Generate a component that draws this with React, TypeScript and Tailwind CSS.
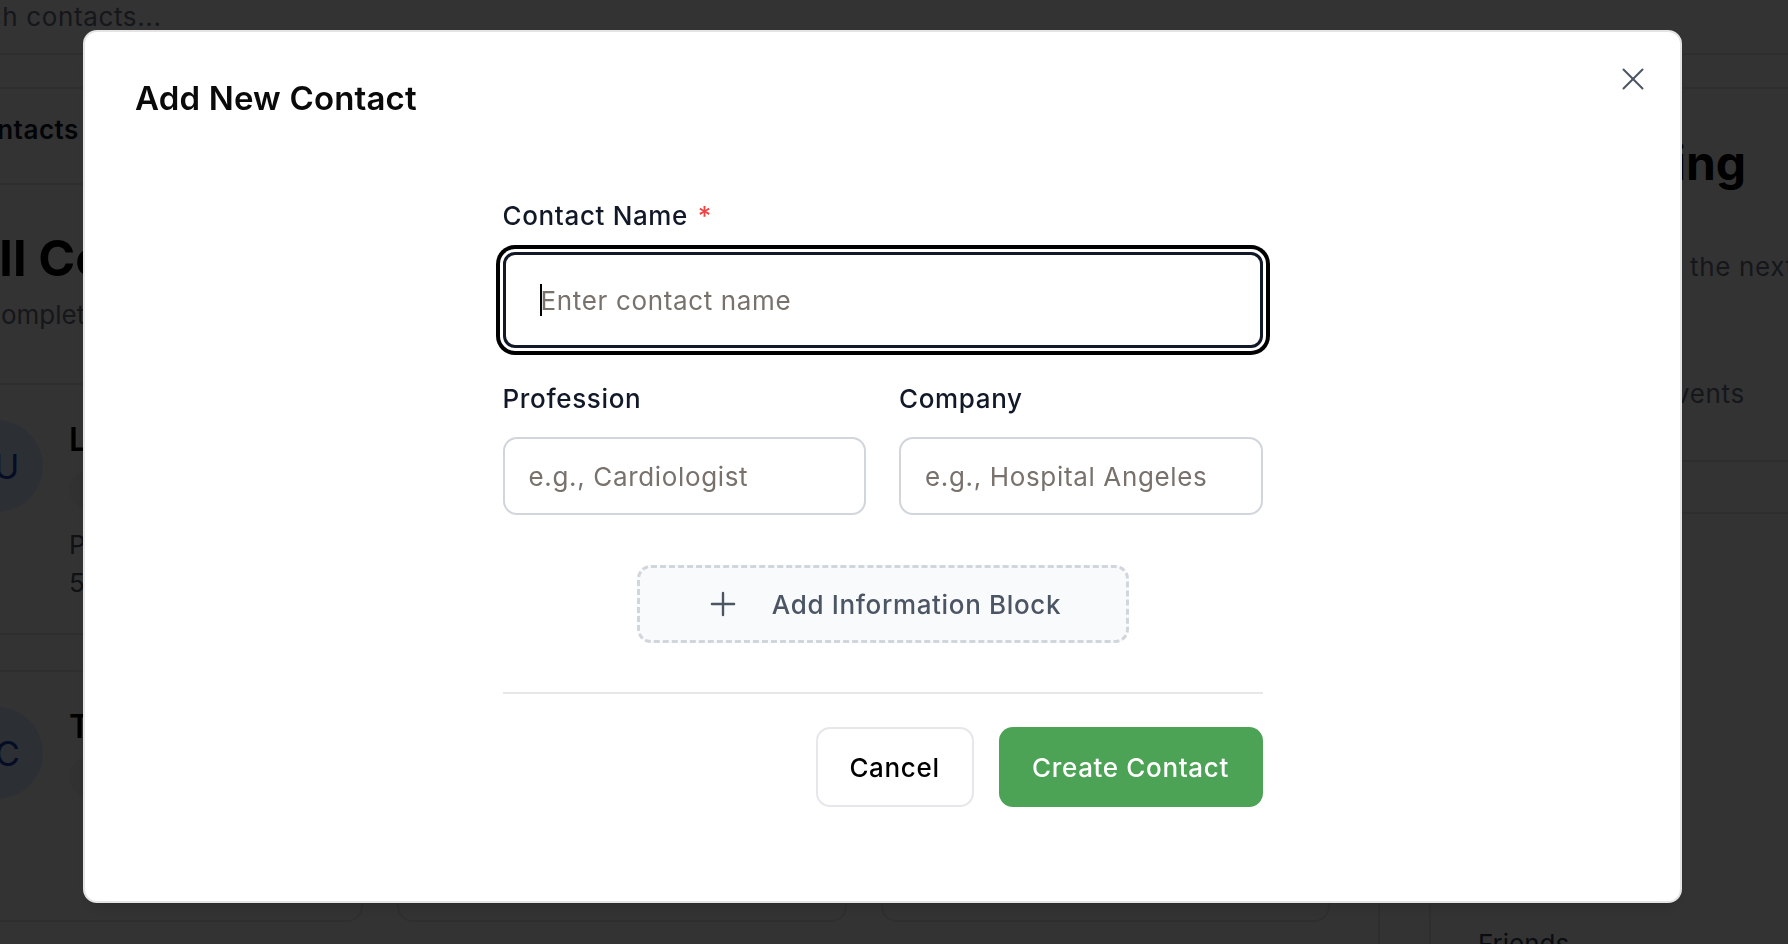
import { X, Plus } from "lucide-react";

function BackgroundPage() {
    const cards = [
        { initials: "LU", name: "Laura Uribe", tag: "Doctor", line1: "Pediatra · Hospital ABC", line2: "55 1234 5678" },
        { initials: "MR", name: "María Ruiz", tag: "Work", line1: "Abogada · Ruiz & Co", line2: "55 2222 3333" },
        { initials: "JP", name: "Jorge Pérez", tag: "Family", line1: "Ingeniero", line2: "55 4444 5555" },
        { initials: "TC", name: "Tomás Castillo", tag: "Friends", line1: "", line2: "" },
        { initials: "AS", name: "Ana Soto", tag: "Work", line1: "", line2: "" },
        { initials: "DG", name: "Diego Gómez", tag: "Friends", line1: "", line2: "" },
    ];

    return (
        <div className="h-[944px] w-full overflow-hidden bg-white font-['Inter',sans-serif] text-gray-900">
            <div className="h-[55px] border-b-2 border-gray-200 pt-[2px]">
                <span className="block -ml-[72px] whitespace-nowrap text-[26px] leading-[30px] tracking-[0.025em] text-gray-500">Search contacts...</span>
            </div>
            <div className="h-[34px] border-b-2 border-gray-200" />
            <div className="flex">
                <main className="-ml-[120px] w-[1500px] shrink-0 border-r-2 border-gray-200">
                    <div className="flex h-[96px] items-center border-b-2 border-gray-200 pb-[14px] pl-[40px]">
                        <span className="whitespace-nowrap text-[26px] font-semibold tracking-[0.02em] text-gray-900">All Contacts</span>
                    </div>
                    <h1 className="ml-[82px] mt-[45px] whitespace-nowrap text-[50px] font-bold leading-[56px] text-black">All Contacts</h1>
                    <p className="ml-[102px] mt-[13px] whitespace-nowrap text-[26px] leading-[32px] text-gray-500">Complete list of your professional contacts</p>
                    <div className="ml-[34px] mt-[52px] grid w-[1416px] grid-cols-3 gap-x-[34px] gap-y-[35px]">
                        {cards.map((c, i) => (
                            <div key={i} className="flex h-[252px] gap-[26px] rounded-[16px] border-2 border-gray-200 px-[35px] pt-[35px]">
                                <div className="flex h-[92px] w-[92px] shrink-0 items-center justify-center rounded-full bg-blue-100 text-[34px] text-blue-800">
                                    {c.initials}
                                </div>
                                <div className="flex flex-col">
                                    <span className="whitespace-nowrap text-[32px] font-semibold leading-[40px] text-black">{c.name}</span>
                                    <span className="mt-[10px] w-fit rounded-full bg-gray-100 px-[16px] text-[20px] leading-[40px] text-gray-600">{c.tag}</span>
                                    {c.line1 && (
                                        <span className="mt-[17px] whitespace-nowrap text-[26px] leading-[36px] text-gray-600">{c.line1}</span>
                                    )}
                                    {c.line2 && (
                                        <span className="mt-[2px] whitespace-nowrap text-[26px] leading-[36px] text-gray-600">{c.line2}</span>
                                    )}
                                </div>
                            </div>
                        ))}
                    </div>
                </main>
                <aside className="flex-1 pl-[49px]">
                    <div className="h-[900px] border-l-2 border-gray-200">
                        <div className="border-b-2 border-gray-200 pb-[50px] pl-[75px]">
                            <h2 className="mt-[46px] whitespace-nowrap text-[48px] font-bold leading-[56px] text-black">Upcoming</h2>
                            <p className="ml-[59px] mt-[60px] whitespace-nowrap text-[26px] leading-[32px] tracking-[0.025em] text-gray-500">Events in the next 7 days</p>
                            <p className="-ml-[26px] mt-[95px] whitespace-nowrap text-[26px] leading-[32px] tracking-[0.025em] text-gray-500">No upcoming events</p>
                        </div>
                        <div className="mt-[50px] border-t-2 border-gray-200" />
                        <p className="mt-[412px] pl-[47px] text-[26px] leading-[36px] text-gray-700">Friends</p>
                    </div>
                </aside>
            </div>
        </div>
    );
}

function Field({ label, placeholder }: { label: string; placeholder: string }) {
    return (
        <div className="flex flex-col">
            <label className="text-[26px] font-medium leading-[32px] tracking-[0.025em] text-[#111827]">{label}</label>
            <input
                type="text"
                placeholder={placeholder}
                className="mt-[22px] h-[78px] w-full rounded-[14px] border-2 border-gray-300 bg-white pl-[24px] text-[26px] tracking-[0.025em] text-gray-900 outline-none placeholder:text-[#78716c]"
            />
        </div>
    );
}

export default function App() {
    return (
        <div className="relative h-[944px] w-full overflow-hidden">
            <BackgroundPage />

            <div className="fixed inset-0 bg-black/80 pl-[83px] pt-[30px] font-['Inter',sans-serif]">
                <div className="relative h-[873px] w-[1599px] rounded-[14px] border-2 border-[#e4e4e4] bg-white px-[50px] pt-[46px] shadow-lg">
                    <button className="absolute right-[28px] top-[28px] text-[#4b5563]">
                        <X size={38} strokeWidth={1.25} />
                    </button>

                    <h2 className="text-[33px] font-semibold leading-[40px] tracking-[0.005em] text-[#0a0a0a]">Add New Contact</h2>

                    <form className="mx-auto mt-[82px] w-[760px]" onSubmit={(e) => e.preventDefault()}>
                        <div className="flex flex-col">
                            <label className="text-[26px] font-medium leading-[32px] tracking-[0.025em] text-[#111827]">
                                Contact Name <span className="ml-[2px] text-[#ef4444]">*</span>
                            </label>
                            <div className="relative mt-[20px]">
                                <input
                                    type="text"
                                    placeholder="Enter contact name"
                                    className="h-[96px] w-full rounded-[12px] border-[3px] border-[#111827] bg-white pl-[35px] text-[26px] tracking-[0.025em] text-gray-900 outline-none ring-4 ring-black ring-offset-3 ring-offset-white placeholder:text-[#78716c]"
                                />
                                <span className="absolute left-[37px] top-[32px] h-[32px] w-[2px] bg-black" />
                            </div>
                        </div>

                        <div className="mt-[35px] grid grid-cols-2 gap-[33px]">
                            <Field label="Profession" placeholder="e.g., Cardiologist" />
                            <Field label="Company" placeholder="e.g., Hospital Angeles" />
                        </div>

                        <button
                            type="button"
                            className="mx-auto mt-[50px] flex h-[78px] w-[492px] items-center justify-center gap-[30px] rounded-[14px] border-[3px] border-dashed border-gray-300 bg-gray-50 text-[26px] font-medium tracking-[0.025em] text-[#4b5563]"
                        >
                            <Plus size={38} strokeWidth={1.5} />
                            <span>Add Information Block</span>
                        </button>

                        <div className="mt-[49px] h-[2px] w-full bg-gray-200" />

                        <div className="mt-[33px] flex justify-end gap-[25px]">
                            <button
                                type="button"
                                className="h-[80px] w-[158px] rounded-[14px] border-2 border-gray-200 bg-white text-[26px] font-medium tracking-[0.025em] text-black"
                            >
                                Cancel
                            </button>
                            <button
                                type="submit"
                                className="h-[80px] w-[264px] rounded-[14px] bg-[#4ca355] text-[26px] font-medium tracking-[0.025em] text-white"
                            >
                                Create Contact
                            </button>
                        </div>
                    </form>
                </div>
            </div>
        </div>
    );
}
